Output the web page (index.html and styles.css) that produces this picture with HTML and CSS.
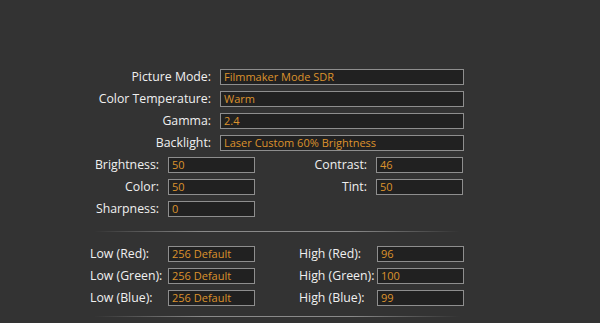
FILE: index.html
```html
<!DOCTYPE html>
<html>
  <head>
    <title>Picture Settings</title>
    <meta name="viewport" content="width=device-width, initial-scale=1">
    <link rel="stylesheet" href="styles.css">
  </head>
  <body>
    <div class="panel">
      <div class="modes">
        <label>Picture Mode:</label><div class="field">Filmmaker Mode SDR</div>
        <label>Color Temperature:</label><div class="field">Warm</div>
        <label>Gamma:</label><div class="field">2.4</div>
        <label>Backlight:</label><div class="field">Laser Custom 60% Brightness</div>
      </div>
      <div class="basics">
        <label>Brightness:</label><div class="field">50</div>
        <label>Contrast:</label><div class="field">46</div>
        <label>Color:</label><div class="field">50</div>
        <label>Tint:</label><div class="field">50</div>
        <label>Sharpness:</label><div class="field">0</div>
      </div>
      <div class="divider"></div>
      <div class="levels">
        <label>Low (Red):</label><div class="field">256 Default</div>
        <label class="hi">High (Red):</label><div class="field">96</div>
        <label>Low (Green):</label><div class="field">256 Default</div>
        <label class="hi">High (Green):</label><div class="field">100</div>
        <label>Low (Blue):</label><div class="field">256 Default</div>
        <label class="hi">High (Blue):</label><div class="field">99</div>
      </div>
      <div class="divider bottom"></div>
    </div>
  </body>
</html>
```

FILE: styles.css
```css
body {
  margin: 0;
  background-color: #333333;
  font-family: "Open Sans", "Noto Sans", sans-serif;
  font-size: 12.3px;
  color: #f0f0f0;
  height: 323px;
  overflow: hidden;
}
.panel {
  width: 374px;
  margin-left: 90px;
  padding-top: 69px;
}
label {
  display: flex;
  align-items: center;
  justify-content: flex-end;
  white-space: nowrap;
  line-height: 16px;
}
.field {
  box-sizing: border-box;
  height: 16px;
  border: 1px solid #8e8e8e;
  background-color: #212121;
  color: #dc922c;
  font-size: 11px;
  line-height: 14px;
  padding-left: 3px;
  white-space: nowrap;
  overflow: hidden;
}
.modes {
  display: grid;
  grid-template-columns: 121px 244px;
  column-gap: 9px;
  row-gap: 6px;
}
.basics {
  display: grid;
  grid-template-columns: 69px 87px 103px 87px;
  column-gap: 9px;
  row-gap: 6px;
  margin-top: 6px;
}
.levels {
  display: grid;
  grid-template-columns: 78px 87px 1fr 87px;
  row-gap: 6px;
}
.levels label {
  justify-content: flex-start;
}
.levels label.hi {
  padding-left: 44px;
}
.divider {
  height: 1px;
  margin: 14px 0 14px 4px;
  width: 366px;
  background: linear-gradient(to right, rgba(140,140,140,0), #8a8a8a 30%, #8a8a8a 70%, rgba(140,140,140,0));
}
.divider.bottom {
  margin-top: 10px;
}
```
